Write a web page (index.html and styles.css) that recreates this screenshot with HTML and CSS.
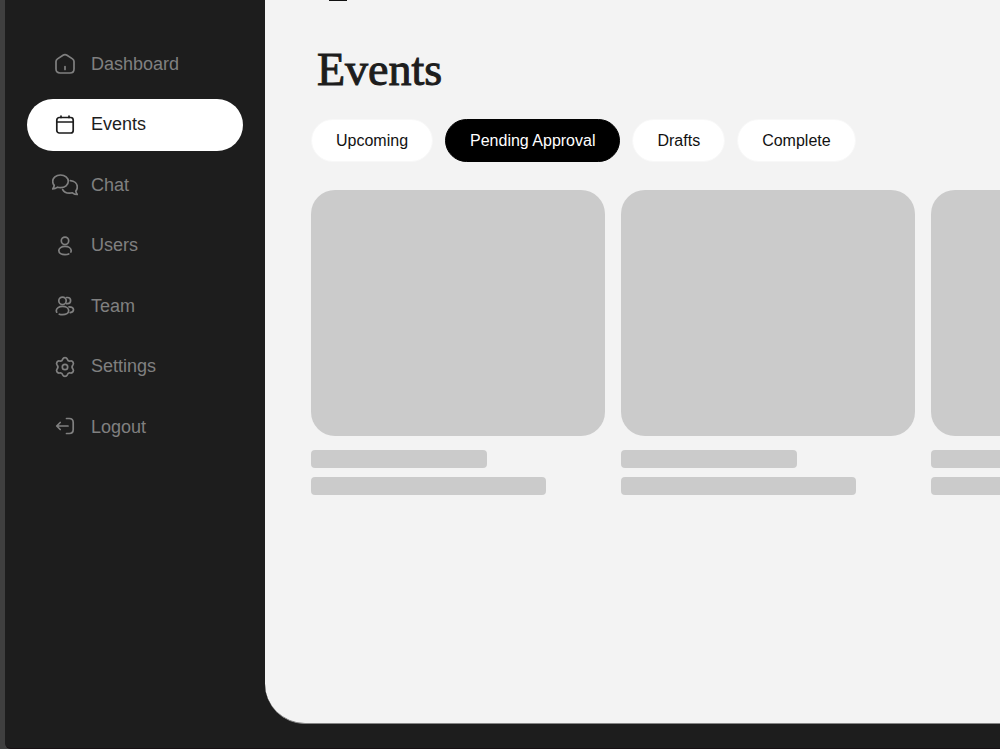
FILE: index.html
```html
<!doctype html>
<html lang="en">
<head>
	<meta charset="utf-8">
	<title>Events</title>
	<meta name="viewport" content="width=device-width, initial-scale=1">
	<link rel="stylesheet" href="styles.css">
</head>
<body>
	<div class="app">
		<aside class="sidebar">
			<nav class="nav">
				<a class="nav-link" href="#dashboard">
					<svg class="icon" viewBox="0 0 26 26"><path d="M4 10.600c0-1.200.5-2 1.500-2.700L11 4.300c1.300-.8 2.700-.8 4 0l5.500 3.600c1 .7 1.500 1.500 1.500 2.700V18c0 2.600-1.400 4-4 4H8c-2.600 0-4-1.400-4-4zM13 15.500v3"/></svg>
					Dashboard
				</a>
				<a class="nav-link active" href="#events">
					<svg class="icon" viewBox="0 0 26 26"><rect x="4.800" y="5.500" width="16.400" height="15.500" rx="2.500"/><path d="M4.800 10h16.400M9 4v1.500M17 4v1.500"/></svg>
					Events
				</a>
				<a class="nav-link" href="#chat">
					<svg class="icon" viewBox="0 0 26 26"><path d="M8.500 3c4.500 0 7.800 2.700 7.800 6.300s-3.300 6.300-7.800 6.300c-1 0-2-.1-2.900-.4C4.300 16.200 2.500 17 .6 17c1-1.100 1.500-2.300 1.600-3.600C1.200 12.200.7 10.800.7 9.300.7 5.700 4 3 8.500 3zM18.300 8.700c4 .3 7 2.900 7 6.300 0 1.500-.5 2.900-1.500 4 .1 1.300.6 2.400 1.600 3.500-1.900 0-3.700-.7-5-1.700-.9.300-1.900.4-2.900.4-3.300 0-5.800-1.400-6.800-3.600"/></svg>
					Chat
				</a>
				<a class="nav-link" href="#users">
					<svg class="icon" viewBox="0 0 26 26"><circle cx="13" cy="7.800" r="3.700"/><path d="M16.700 21c-1 .5-2.300.7-3.700.7-3.500 0-6.200-1.700-6.200-4.100s2.700-4.200 6.200-4.200 6.200 1.800 6.200 4.200c0 .5-.1.900-.3 1.400"/></svg>
					Users
				</a>
				<a class="nav-link" href="#team">
					<svg class="icon" viewBox="0 0 26 26"><circle cx="10.500" cy="7.800" r="3.700"/><path d="M14.500 4.500h1a3.100 3.100 0 0 1 0 6.200h-.8M4.700 19.200c-.3-.5-.4-1-.4-1.600 0-2.400 2.700-4.200 6.200-4.200s6.200 1.800 6.200 4.200-2.700 4.100-6.200 4.100c-1.200 0-2.300-.2-3.200-.5M17 13.800c2.600 0 4.500 1.300 4.500 3 0 1.500-1.300 2.500-3.300 2.900"/></svg>
					Team
				</a>
				<a class="nav-link" href="#settings">
					<svg class="icon" viewBox="0 0 26 26"><circle cx="13" cy="13" r="2.700"/><path d="M10.700 5.200A2.500 2.500 0 0 1 15.300 5.200Q16.100 7.600 18.600 7A2.500 2.500 0 0 1 20.900 11Q19.200 13 20.900 15A2.500 2.500 0 0 1 18.600 19Q16.100 18.400 15.300 20.800A2.500 2.500 0 0 1 10.700 20.800Q9.900 18.400 7.400 19A2.500 2.500 0 0 1 5.100 15Q6.800 13 5.100 11A2.500 2.500 0 0 1 7.400 7Q9.900 7.600 10.700 5.200z"/></svg>
					Settings
				</a>
				<a class="nav-link" href="#logout">
					<svg class="icon" viewBox="0 0 26 26"><path d="M14.500 4.500h2.700c2.600 0 4 1.400 4 4v7c0 2.600-1.400 4-4 4h-2.700M16 12H5M8.200 8.500 4.700 12l3.500 3.500"/></svg>
					Logout
				</a>
			</nav>
		</aside>

		<main class="content">
			<div class="topbar"><span class="topbar-mark"></span></div>
			<h1 class="title">Events</h1>

			<div class="tabs">
				<button class="tab" type="button">Upcoming</button>
				<button class="tab selected" type="button">Pending Approval</button>
				<button class="tab" type="button">Drafts</button>
				<button class="tab" type="button">Complete</button>
			</div>

			<!-- loading placeholders -->
			<div class="cards">
				<div class="card">
					<div class="card-image"></div>
					<div class="card-line short"></div>
					<div class="card-line"></div>
				</div>
				<div class="card">
					<div class="card-image"></div>
					<div class="card-line short"></div>
					<div class="card-line"></div>
				</div>
				<div class="card">
					<div class="card-image"></div>
					<div class="card-line short"></div>
					<div class="card-line"></div>
				</div>
			</div>
		</main>
	</div>
</body>
</html>
```
FILE: styles.css
```css
* {
	box-sizing: border-box;
}

body {
	margin: 0;
	padding-left: 5px;
	background-color: #3f3f3f;
	font-family: "Liberation Sans", Arial, sans-serif;
}

.app {
	display: flex;
	min-height: 100vh;
	padding-bottom: 24px;
	background-color: #1d1d1d;
	border-bottom: 1px solid #171114;
	border-bottom-left-radius: 6px;
	overflow: hidden;
}

.sidebar {
	flex: 0 0 260px;
	padding: 38px 22px 0;
}

.nav {
	display: flex;
	flex-direction: column;
	justify-content: space-between;
	min-height: 415px;
}

.nav-link {
	display: flex;
	align-items: center;
	gap: 13px;
	height: 52px;
	padding: 0 25px;
	border-radius: 26px;
	color: #808080;
	font-size: 18px;
	text-decoration: none;
}

.nav-link.active {
	background-color: #fff;
	color: #1d1d1d;
}

.icon {
	width: 26px;
	height: 26px;
	fill: none;
	stroke: currentColor;
	stroke-width: 1.7;
	stroke-linecap: round;
	stroke-linejoin: round;
}

.content {
	flex: 1;
	min-width: 0;
	padding-left: 46px;
	background-color: #f3f3f3;
	border-bottom: 1px solid #858585;
	border-bottom-left-radius: 40px;
	overflow: hidden;
}

.topbar {
	height: 44px;
	padding-left: 18px;
}

.topbar-mark {
	display: block;
	width: 18px;
	height: 1px;
	background-color: #111;
}

.title {
	margin: 0 0 23px;
	padding-left: 6px;
	color: #1d1d1d;
	font-family: "Liberation Serif", "Times New Roman", serif;
	font-size: 46px;
	font-weight: normal;
	line-height: 52px;
	-webkit-text-stroke: 1px #1d1d1d;
}

.tabs {
	display: flex;
	gap: 12px;
	margin-bottom: 28px;
}

.tab {
	height: 43px;
	padding: 0 24px;
	border: 1px solid #f8f8f8;
	border-radius: 22px;
	background-color: #fff;
	color: #111;
	font-family: inherit;
	font-size: 16px;
}

.tab.selected {
	border-color: #000;
	background-color: #000;
	color: #fff;
}

.cards {
	display: flex;
	gap: 16px;
}

.card {
	flex: 0 0 294px;
}

.card-image {
	height: 246px;
	margin-bottom: 14px;
	border-radius: 24px;
	background-color: #cbcbcb;
}

.card-line {
	width: 80%;
	height: 18px;
	margin-bottom: 9px;
	border-radius: 4px;
	background-color: #cbcbcb;
}

.card-line.short {
	width: 60%;
}
```
